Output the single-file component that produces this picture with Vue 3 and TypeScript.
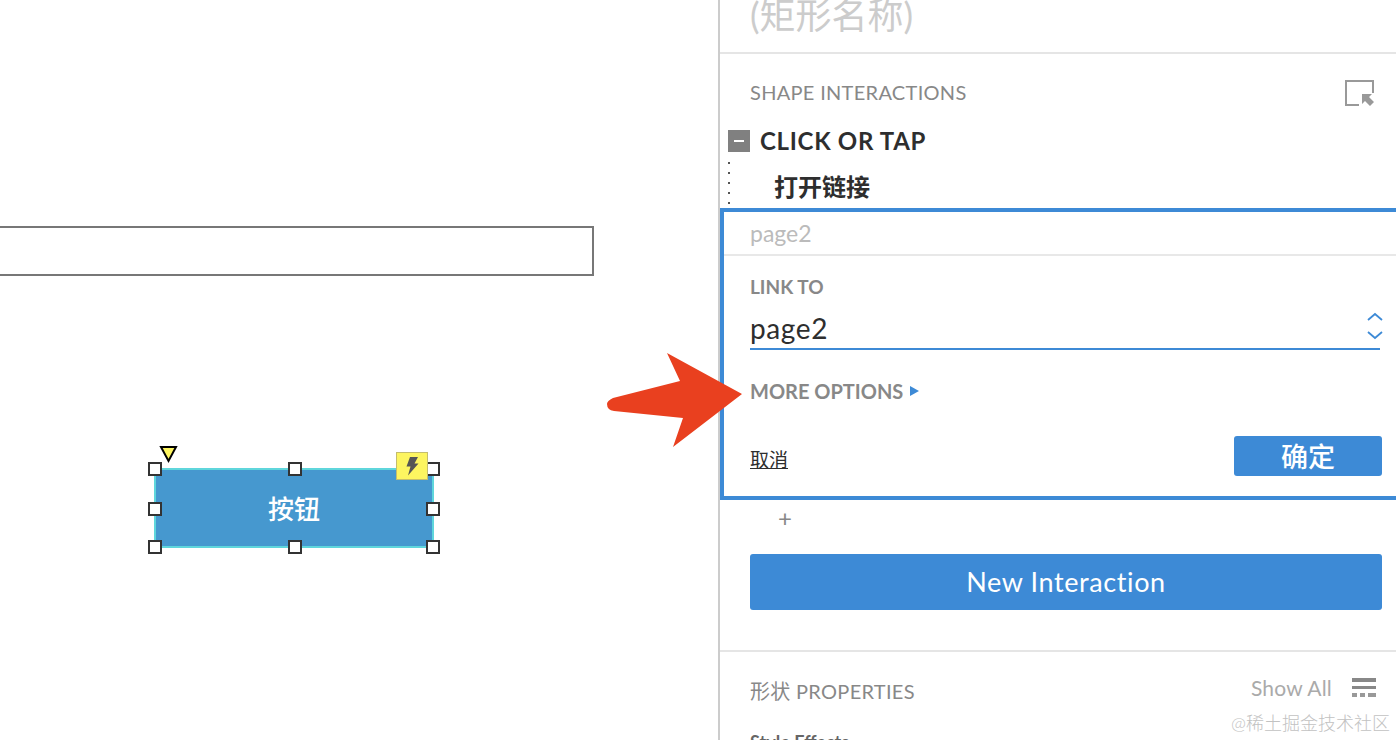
<script setup lang="ts">
const handles: [number, number][] = [
  [155, 469], [295, 469], [433, 469],
  [155, 509], [433, 509],
  [155, 547], [295, 547], [433, 547],
]
</script>

<template>
  <div class="page">
    <section class="canvas">
      <div class="field"></div>
      <div class="shape">按钮</div>
      <span
        v-for="h in handles"
        :key="h[0] + '-' + h[1]"
        class="handle"
        :style="{ left: h[0] - 7 + 'px', top: h[1] - 7 + 'px' }"
      ></span>
      <svg class="marker" width="19" height="19" viewBox="0 0 19 19">
        <path d="M2 2H17L9.5 16Z" fill="#fdf560" stroke="#000" stroke-width="2" />
      </svg>
      <div class="bolt">
        <svg width="16" height="20" viewBox="0 0 16 20">
          <path d="M6 1H14L10.5 7.5H14.5L4 19.5L6.5 10.5H2.5Z" fill="#555" />
        </svg>
      </div>
    </section>

    <aside class="panel">
      <div class="title">(矩形名称)</div>

      <div class="section-head">
        <span class="section-label">SHAPE INTERACTIONS</span>
        <svg width="30" height="28" viewBox="0 0 30 28">
          <path d="M14 26H1V2H28V14" fill="none" stroke="#999" stroke-width="2" />
          <path d="M17 15H27L24 18L29 23L25 27L20 22L17 25Z" fill="#999" />
        </svg>
      </div>

      <div class="event">
        <span class="toggle"><i></i></span>
        <span class="event-label">CLICK OR TAP</span>
      </div>
      <div class="action">打开链接</div>

      <div class="editor">
        <div class="editor-name">page2</div>
        <div class="editor-body">
          <div class="label">LINK TO</div>
          <div class="select">
            <span class="select-value">page2</span>
            <svg class="chevrons" width="18" height="28" viewBox="0 0 18 28">
              <path d="M2 8L9 2L16 8M2 20L9 26L16 20" fill="none" stroke="#3d8ad6" stroke-width="1.8" />
            </svg>
          </div>
          <div class="more">
            <span>MORE OPTIONS</span>
            <i class="caret"></i>
          </div>
          <div class="actions">
            <a class="cancel">取消</a>
            <button class="ok" type="button">确定</button>
          </div>
        </div>
      </div>

      <div class="plus">+</div>
      <button class="new" type="button">New Interaction</button>

      <div class="props">
        <div class="props-head">
          <span class="props-label">形状 PROPERTIES</span>
          <span class="show">
            <span class="show-text">Show All</span>
            <svg width="24" height="19" viewBox="0 0 24 19">
              <path d="M0 0H24V4H0ZM0 8H24V11H0Z" fill="#888" />
              <path d="M0 15H5V19H0ZM8 15H13V19H8ZM16 15H24V19H16Z" fill="#999" />
            </svg>
          </span>
        </div>
        <div class="effects">Style Effects</div>
      </div>
      <div class="watermark">@稀土掘金技术社区</div>
    </aside>

    <svg class="arrow" width="140" height="100" viewBox="0 0 140 100">
      <path
        d="M136 42L61 1L74 29L7 46Q1 49 1 52Q1 58 8 59L77 66L67 95Z"
        fill="#e9401f"
      />
    </svg>
  </div>
</template>

<style>
html,
body {
  margin: 0;
  background: #fff;
}
</style>

<style scoped>
.page {
  position: relative;
  display: flex;
  width: 1396px;
  height: 740px;
  overflow: hidden;
  background: #fff;
  font-family: Lato, "Noto Sans CJK SC", sans-serif;
}
.canvas {
  position: relative;
  width: 718px;
  flex: none;
}
.field {
  position: absolute;
  left: -4px;
  top: 226px;
  width: 594px;
  height: 46px;
  border: 2px solid #777;
}
.shape {
  position: absolute;
  left: 154px;
  top: 468px;
  width: 276px;
  height: 76px;
  border: 2px solid #5fd6dc;
  background: #4698cf;
  color: #fff;
  font-size: 26px;
  font-weight: 500;
  line-height: 78px;
  text-align: center;
}
.handle {
  position: absolute;
  box-sizing: border-box;
  width: 14px;
  height: 14px;
  border: 2px solid #333;
  background: #fff;
}
.marker {
  position: absolute;
  left: 159px;
  top: 445px;
}
.bolt {
  position: absolute;
  left: 396px;
  top: 452px;
  display: flex;
  box-sizing: border-box;
  width: 32px;
  height: 28px;
  align-items: center;
  justify-content: center;
  border: 1px solid #c4bd6e;
  background: #fdf560;
}
.panel {
  position: relative;
  flex: 1;
  min-width: 0;
  border-left: 2px solid #ccc;
}
.title {
  box-sizing: border-box;
  height: 54px;
  padding-left: 30px;
  overflow: hidden;
  border-bottom: 2px solid #e5e5e5;
  color: #ccc;
  font-size: 36px;
  line-height: 30px;
}
.section-head {
  display: flex;
  height: 52px;
  align-items: center;
  justify-content: space-between;
  margin-top: 13px;
  padding: 0 21px 0 30px;
  color: #888;
  font-size: 20px;
  letter-spacing: 0.3px;
}
.section-label {
  margin-top: -2px;
}
.event {
  display: flex;
  height: 44px;
  align-items: center;
  gap: 10px;
  padding-left: 8px;
  color: #2e2e2e;
  font-size: 24px;
  font-weight: 700;
  letter-spacing: 0.7px;
}
.event-label {
  margin-top: -2px;
}
.toggle {
  display: flex;
  width: 22px;
  height: 22px;
  align-items: center;
  justify-content: center;
  background: #808080;
}
.toggle i {
  width: 10px;
  height: 2px;
  background: #fff;
}
.action {
  height: 50px;
  margin-top: -5px;
  margin-left: 8px;
  padding-left: 46px;
  background-image: radial-gradient(circle, #555 1px, transparent 1.2px);
  background-repeat: repeat-y;
  background-size: 2px 10px;
  color: #2e2e2e;
  font-size: 24px;
  font-weight: 700;
  line-height: 58px;
}
.editor {
  box-sizing: border-box;
  height: 292px;
  border-width: 4px 0 4px 4px;
  border-style: solid;
  border-color: #3d8ad6;
}
.editor-name {
  box-sizing: border-box;
  height: 44px;
  padding-left: 26px;
  border-bottom: 2px solid #e8e8e8;
  color: #bbb;
  font-size: 23px;
  line-height: 42px;
}
.editor-body {
  padding: 0 14px 0 26px;
}
.label {
  height: 22px;
  margin-top: 20px;
  color: #888;
  font-size: 19px;
  font-weight: 700;
  line-height: 22px;
}
.select {
  display: flex;
  box-sizing: border-box;
  height: 52px;
  align-items: center;
  justify-content: space-between;
  margin-right: 2px;
  padding-top: 12px;
  border-bottom: 2px solid #3d8ad6;
  color: #2e2e2e;
  font-size: 28px;
  letter-spacing: 0.6px;
}
.select-value {
  margin-top: -2px;
}
.chevrons {
  margin-top: -6px;
  margin-right: -4px;
}
.more {
  display: flex;
  align-items: center;
  gap: 7px;
  height: 24px;
  margin-top: 29px;
  color: #888;
  font-size: 20px;
  font-weight: 700;
}
.caret {
  width: 0;
  height: 0;
  border-top: 5px solid transparent;
  border-bottom: 5px solid transparent;
  border-left: 9px solid #3d8ad6;
}
.actions {
  display: flex;
  align-items: flex-start;
  justify-content: space-between;
  margin-top: 33px;
}
.cancel {
  margin-top: 12px;
  color: #2e2e2e;
  font-size: 19px;
  line-height: 24px;
  text-decoration: underline;
}
.ok {
  width: 148px;
  height: 40px;
  padding: 0;
  border: 0;
  border-radius: 3px;
  background: #3d8ad6;
  color: #fff;
  font: 500 27px/38px "Noto Sans CJK SC", sans-serif;
}
.plus {
  height: 38px;
  padding-left: 58px;
  color: #888;
  font-size: 24px;
  line-height: 36px;
}
.new {
  display: block;
  width: 632px;
  height: 56px;
  margin: 16px 0 0 30px;
  padding: 0;
  border: 0;
  border-radius: 3px;
  background: #3d8ad6;
  color: #fff;
  font: 400 27px/56px Lato, sans-serif;
  letter-spacing: 0.6px;
}
.props {
  margin-top: 40px;
  padding: 0 20px 0 30px;
  border-top: 2px solid #e5e5e5;
}
.props-head {
  display: flex;
  height: 78px;
  align-items: center;
  justify-content: space-between;
  color: #888;
  font-size: 20px;
  letter-spacing: 0.3px;
}
.props-label {
  margin-top: -2px;
}
.show {
  display: flex;
  align-items: center;
  gap: 20px;
  margin-top: -7px;
}
.show-text {
  color: #aaa;
  font-size: 21px;
  letter-spacing: 0.2px;
}
.effects {
  margin-top: 1px;
  color: #666;
  font-size: 18px;
  font-weight: 700;
  line-height: 22px;
}
.watermark {
  position: absolute;
  right: 6px;
  top: 712px;
  color: #c2c2c2;
  font-size: 18px;
  font-weight: 300;
  line-height: 22px;
}
.arrow {
  position: absolute;
  left: 606px;
  top: 352px;
}
</style>
